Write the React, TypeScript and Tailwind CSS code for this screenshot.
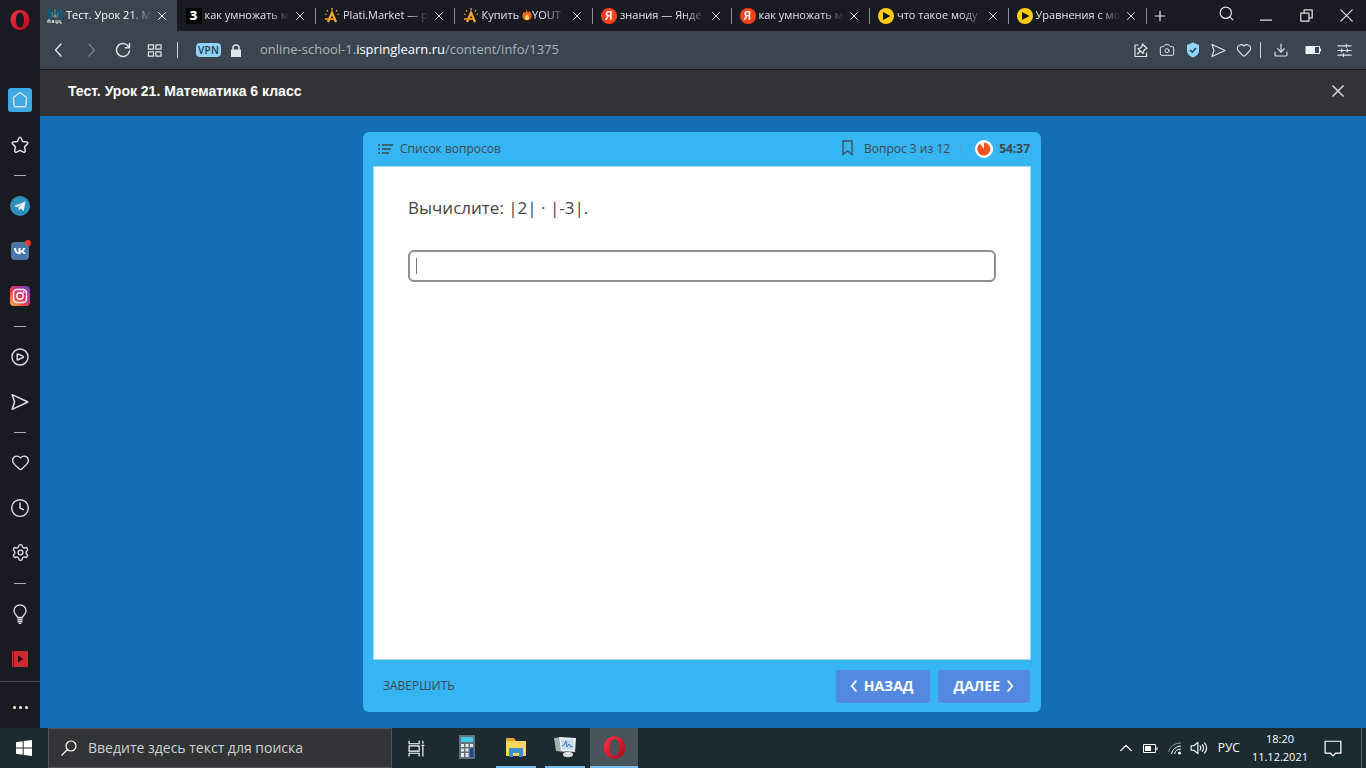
import type { ReactNode } from 'react'
import { Camera, Clock, Download, Heart, Plus, Search, Settings, X } from 'lucide-react'

interface Tab { title: string; icon: ReactNode; active?: boolean }

function Line({ d, size = 16, width = 1.2, box = 16, className = '' }: { d: string; size?: number; width?: number; box?: number; className?: string }) {
  return (
    <svg width={size} height={size} viewBox={`0 0 ${box} ${box}`} fill="none" stroke="currentColor" strokeWidth={width} strokeLinecap="round" strokeLinejoin="round" className={`shrink-0 ${className}`}>
      <path d={d} />
    </svg>
  )
}

function OperaLogo({ size, id }: { size: number; id: string }) {
  return (
    <svg width={size} height={size} viewBox="0 0 24 24" className="shrink-0">
      <defs>
        <linearGradient id={id} x1="0" y1="0" x2="1" y2="1">
          <stop offset="0" stopColor="#ff3346" />
          <stop offset="1" stopColor="#b0061c" />
        </linearGradient>
      </defs>
      <path fillRule="evenodd" fill={`url(#${id})`} d="M12 2C6.400 2 2.500 6.500 2.500 12s3.900 10 9.500 10 9.500-4.500 9.500-10S17.600 2 12 2Zm0 2.500c2.800 0 4 3.500 4 7.500s-1.200 7.500-4 7.500-4-3.500-4-7.500 1.200-7.500 4-7.500Z" />
    </svg>
  )
}

const SEND = 'M1 1.500L15 8L1 14.500L3.200 8Z'

const schoolIcon = (
  <svg width="16" height="16" viewBox="0 0 16 16" className="shrink-0">
    <path d="M1 1h3v10H1zM12 1h3v10h-3z" fill="#145a7c" />
    <path d="M8 1v6M5 4l1 6M11 4l-1 6" stroke="#2388a5" strokeWidth="1.500" />
    <circle cx="8" cy="8" r="1.500" fill="#e0714b" />
    <path d="M1 15v-3h2v3M5 15l1-3 1 3M9 12v3h2v-3M13 12v3h2" stroke="#e8eef0" fill="none" />
  </svg>
)
const znanijaIcon = (
  <span className="flex size-4 shrink-0 items-center justify-center bg-black text-xs leading-none font-extrabold text-white">З</span>
)
const platiIcon = (
  <svg width="16" height="16" viewBox="0 0 16 16" className="shrink-0" fill="none" stroke="#f5a82c">
    <path d="M4 14L8 4.500L12 14" strokeWidth="2.200" />
    <path d="M1 11h9" strokeWidth="1.800" stroke="#e88f22" />
    <path d="M8 0v2M3 2l1 1.500M13 2l-1 1.500M1 6l1.500.500M15 6l-1.500.500" strokeWidth="1.300" />
  </svg>
)
const yandexIcon = (
  <span className="flex size-4 shrink-0 items-center justify-center rounded-full bg-[#fc3f1d] text-xs leading-none font-semibold text-white">Я</span>
)
const playIcon = (
  <svg width="16" height="16" viewBox="0 0 16 16" className="shrink-0">
    <circle cx="8" cy="8" r="8" fill="#ffcc14" />
    <path d="M5 4L12.500 8L5 12Z" fill="#141414" />
  </svg>
)
const flame = (
  <svg width="10" height="13" viewBox="0 0 12 14" className="inline-block align-[-2px]">
    <path d="M5 0c1 2 .600 3 2.500 5C8.500 4 8 3 8.300 2.500 10 4 12 6 11.500 9.500 11 12.500 9 14 6 14S.500 12 .500 9C.500 6 2 5 2.500 3.500c.800.800.800 1.500 1 2C5 4 5.200 2 5 0Z" fill="#f4661b" />
    <path d="M6 6.500c.300 1.500 2.800 2.500 2.500 5C8.300 13 7.300 13.800 6 13.800S3.300 12.500 3.500 11C3.700 9 5.800 8.500 6 6.500Z" fill="#ffd85c" />
  </svg>
)

const tabs: Tab[] = [
  { title: 'Тест. Урок 21. М', icon: schoolIcon, active: true },
  { title: 'как умножать м', icon: znanijaIcon },
  { title: 'Plati.Market — р', icon: platiIcon },
  { title: 'Купить 🔥YOUT', icon: platiIcon },
  { title: 'знания — Янде', icon: yandexIcon },
  { title: 'как умножать м', icon: yandexIcon },
  { title: 'что такое моду', icon: playIcon },
  { title: 'Уравнения с мо', icon: playIcon },
]

const telegram = (
  <svg width="20" height="20" viewBox="0 0 20 20">
    <circle cx="10" cy="10" r="10" fill="#2f8fbd" />
    <path d="M4 10L15.500 5.500L13.800 15L10.500 12.600L8.800 14.300L8.400 11.500L13 7.500L7 11.200Z" fill="#eef2fb" />
  </svg>
)
const vk = (
  <span className="relative block">
    <svg width="18" height="18" viewBox="0 0 18 18">
      <rect width="18" height="18" rx="4" fill="#4a76a8" />
      <path d="M3 6h2c.200 2.500 1.200 4 2.500 4.500V6h2v2.700C10.800 8.500 11.800 7.300 12.300 6h2c-.300 1.400-1.200 2.500-2.100 3.100 1 .500 2 1.500 2.600 3h-2.200c-.500-1.100-1.500-1.900-3.100-2.100v2.100C5.500 12.400 3.100 10 3 6Z" fill="#fff" />
    </svg>
    <span className="absolute -top-0.5 -right-0.5 size-1.5 rounded-full bg-[#f23c34]" />
  </span>
)
const instagram = (
  <svg width="20" height="20" viewBox="0 0 20 20" fill="none">
    <defs>
      <linearGradient id="insta" x1="0" y1="1" x2="1" y2="0">
        <stop offset="0" stopColor="#fdc14b" />
        <stop offset=".35" stopColor="#ef4a3f" />
        <stop offset=".65" stopColor="#cc2d92" />
        <stop offset="1" stopColor="#5b45c9" />
      </linearGradient>
    </defs>
    <rect width="20" height="20" rx="4" fill="url(#insta)" />
    <rect x="3.500" y="3.500" width="13" height="13" rx="3.500" stroke="#fff" strokeWidth="1.400" />
    <circle cx="10" cy="10" r="3.200" stroke="#fff" strokeWidth="1.400" />
    <circle cx="13.800" cy="6.200" r=".900" fill="#fff" />
  </svg>
)
const player = (
  <svg width="18" height="18" viewBox="0 0 18 18" fill="none" stroke="currentColor" strokeWidth="1.400" strokeLinejoin="round">
    <circle cx="9" cy="9" r="8" />
    <path d="M6.200 6v6L12.500 9.300C12.500 8.500 9 6.800 6.200 6Z" />
  </svg>
)
const bulb = (
  <svg width="16" height="20" viewBox="0 0 16 20" fill="none" stroke="currentColor" strokeWidth="1.300">
    <path d="M5.500 13.500C5.500 11.500 2 10.500 2 6.800A6 6 0 0 1 14 6.800C14 10.500 10.500 11.500 10.500 13.500ZM5.500 15.500h5M5.500 17.500h5M6.500 19.300h3" />
  </svg>
)
const videoPanel = (
  <svg width="16" height="16" viewBox="0 0 16 16">
    <path d="M0 0h16v16H0z" fill="#cc2b32" />
    <path d="M1.500 0v16" stroke="#85151b" />
    <path d="M6 4.500L11.500 8L6 11.500Z" fill="#1c1014" />
  </svg>
)

const sidebar: { label: string; icon: ReactNode; divided?: boolean }[] = [
  {
    label: 'Экспресс-панель',
    icon: (
      <span className="flex size-6 items-center justify-center rounded-[3px] bg-[#3ca9e2]">
        <Line d="M1.500 6Q1.500 5.400 2 5L7 1.200Q8 .600 9 1.200L14 5Q14.500 5.400 14.500 6L14 13.500Q14 14.800 12.700 14.800H3.300Q2 14.800 2 13.500Z" width={1.4} />
      </span>
    ),
  },
  { label: 'Закладки', icon: <Line size={18} width={1.3} d="M8 1Q8.800 1 9.300 2.500L10.300 4.900L14 5.300Q15.700 5.800 14.500 7.200L12 9.500L12.700 13Q12.600 15 11 14.300L8 12.800L5 14.300Q3.400 15 3.300 13L4 9.500L1.500 7.200Q.300 5.800 2 5.300L5.700 4.900L6.700 2.500Q7.200 1 8 1Z" />, divided: true },
  { label: 'Telegram', icon: telegram },
  { label: 'ВКонтакте', icon: vk },
  { label: 'Instagram', icon: instagram, divided: true },
  { label: 'Плеер', icon: player },
  { label: 'Мой поток', icon: <Line size={18} width={1.3} d={SEND} />, divided: true },
  { label: 'Избранное', icon: <Heart size={19} strokeWidth={1.7} /> },
  { label: 'История', icon: <Clock size={20} strokeWidth={1.7} /> },
  { label: 'Настройки', icon: <Settings size={19} strokeWidth={1.7} />, divided: true },
  { label: 'Советы', icon: bulb },
  { label: 'Видео', icon: videoPanel },
]

function Sidebar() {
  return (
    <aside className="flex w-10 shrink-0 flex-col bg-[#181b20] text-[#dde1e5]">
      <div className="flex h-[77px] justify-center pt-2">
        <button aria-label="Opera" className="size-6"><OperaLogo size={24} id="opera-menu" /></button>
      </div>
      {sidebar.map(s => (
        <div key={s.label}>
          <button aria-label={s.label} className="flex h-[45px] w-full items-center justify-center">{s.icon}</button>
          {s.divided && <div className="flex h-4 items-center justify-center"><span className="h-px w-3 bg-[#a9adb2]" /></div>}
        </div>
      ))}
      <button aria-label="Ещё" className="mt-auto flex h-[47px] items-center justify-center gap-[3px] border-t border-[#4a4d52] pt-1">
        <span className="size-[3px] rounded-full bg-white" />
        <span className="size-[3px] rounded-full bg-white" />
        <span className="size-[3px] rounded-full bg-white" />
      </button>
    </aside>
  )
}

function TabStrip() {
  return (
    <div className="flex h-[31px] bg-[#181b20] text-[11px] text-[#dfe2e5]">
      <div className="flex min-w-0 max-w-[1108px] flex-1">
        {tabs.map((t, i) => (
          <div key={i} className="flex min-w-0 flex-1 items-center pr-px">
            <div className={`flex h-full min-w-0 flex-1 items-center gap-[3px] pr-2 pl-[7px] ${t.active ? 'bg-[#3b454f] text-white' : ''}`}>
              {t.icon}
              <span className="min-w-0 flex-1 overflow-hidden whitespace-nowrap [mask-image:linear-gradient(to_right,black_75%,transparent)]">
                {t.title.includes('🔥') ? <>Купить {flame}YOUT</> : t.title}
              </span>
              <button aria-label="Закрыть вкладку"><X size={14} strokeWidth={1.7} /></button>
            </div>
            <span className={`h-4 w-px ${t.active ? '' : 'bg-[#8b8f94]'}`} />
          </div>
        ))}
      </div>
      <button aria-label="Новая вкладка" className="ml-1"><Plus size={16} strokeWidth={1.8} /></button>
      <div className="ml-auto flex items-center">
        <button aria-label="Поиск по вкладкам" className="flex w-10 justify-center pb-1"><Search size={17} strokeWidth={1.7} /></button>
        <button aria-label="Свернуть" className="flex w-10 justify-center"><Line size={12} d="M0 13.500H16" width={1.5} /></button>
        <button aria-label="Свернуть в окно" className="flex w-10 justify-center"><Line size={13} d="M1 5H11V15H1ZM5 5V1H15V11H11" width={1.5} /></button>
        <button aria-label="Закрыть" className="flex w-10 justify-center"><Line size={13} d="M1 1L15 15M15 1L1 15" width={1.5} /></button>
      </div>
    </div>
  )
}

function AddressBar() {
  return (
    <div className="flex h-[39px] items-center border-b border-[#16191d] bg-[#3b454f] pr-3.5 pl-[11px] text-[#dfe4e9]">
      <button aria-label="Назад"><Line d="M10 2L4.500 8L10 14" width={1.4} /></button>
      <button aria-label="Вперёд" className="ml-4 text-[#77808a]"><Line d="M6 2L11.500 8L6 14" width={1.3} /></button>
      <button aria-label="Обновить" className="ml-4"><Line d="M14 5.500A6.500 6.500 0 1 0 14.400 9M14.500 1.500V5.700H10.300" width={1.4} /></button>
      <button aria-label="Экспресс-панель" className="ml-4"><Line size={15} d="M1.500 2H7V6.500H1.500ZM9.500 2H15V6.500H9.500ZM1.500 9.500H7V14H1.500ZM9.500 9.500H15V14H9.500Z" width={1.3} /></button>
      <span className="ml-[15px] h-4 w-px bg-[#ccd2d8]" />
      <span className="ml-[18px] rounded-sm bg-[#8fd2fa] px-0.5 text-[10px] leading-[14px] font-semibold tracking-wide text-[#243a4a]">VPN</span>
      <svg width="10" height="13" viewBox="0 0 10 13" className="ml-2.5" fill="#dfe4e9">
        <path d="M0 5.500h10V13H0z" />
        <path d="M2 6V4a3 3 0 0 1 6 0v2" fill="none" stroke="#dfe4e9" strokeWidth="1.500" />
      </svg>
      <p className="ml-[19px] text-[13px] text-[#a9b3bd]">
        online-school-1.<span className="text-white">ispringlearn.ru</span>/content/info/1375
      </p>
      <div className="ml-auto flex items-center gap-2.5">
        <button aria-label="Закрепить"><Line d="M5 3H2V14.500H13.500V11M9.500 2L14 6.500L12.500 7L10.500 9L10 11.500L5 6.700L7.500 6L9.200 4ZM7.300 9L4.500 12" width={1.2} /></button>
        <button aria-label="Снимок"><Camera size={16} strokeWidth={1.5} /></button>
        <button aria-label="Защита">
          <svg width="16" height="16" viewBox="0 0 16 16">
            <path d="M8 .500L14 3V9C14 12 11 14.200 8 15.500C5 14.200 2 12 2 9V3Z" fill="#90d5fb" />
            <path d="M5 8L7.300 10.200L11 6" fill="none" stroke="#2c4354" strokeWidth="1.600" />
          </svg>
        </button>
        <button aria-label="Мой поток"><Line size={15} d={SEND} /></button>
        <button aria-label="В избранное"><Heart size={16} strokeWidth={1.6} /></button>
      </div>
      <span className="ml-2 h-4 w-px bg-[#ccd2d8]" />
      <button aria-label="Загрузки" className="ml-3"><Download size={16} strokeWidth={1.7} /></button>
      <svg width="16" height="8" viewBox="0 0 16 8" className="ml-4">
        <path d="M.500 0h9.500v8H.500z" fill="#eef1f4" />
        <path d="M10 .500h4.500v7H10M15.500 2.500v3" fill="none" stroke="#eef1f4" />
      </svg>
      <button aria-label="Простая настройка" className="ml-4"><Line size={15} d="M1 3H15M1 8H15M1 13H15M10 1.500V4.500M5 6.500V9.500M11 6.500V9.500M7 11.500V14.500" width={1.3} /></button>
    </div>
  )
}

function Quiz() {
  return (
    <section className="mx-auto flex w-full max-w-[678px] flex-1 flex-col rounded-md bg-[#35b5f1] px-2.5 text-[#3f4a50]">
      <header className="flex h-[34px] items-center px-[5px] text-xs">
        <button className="flex items-center gap-[7px] font-medium">
          <svg width="15" height="10" viewBox="0 0 15 10" fill="none" stroke="currentColor">
            <path d="M4 1h11M4 5h9M4 9h7" strokeWidth="1.500" />
            <path d="M0 1h2M0 5h2M0 9h2" strokeWidth="1.500" />
          </svg>
          Список вопросов
        </button>
        <button aria-label="Отметить вопрос" className="ml-auto pb-0.5">
          <svg width="11" height="16" viewBox="0 0 11 16" fill="none" stroke="currentColor" strokeWidth="1.300">
            <path d="M1 1h9v13.500L5.500 11L1 14.500Z" />
          </svg>
        </button>
        <span className="ml-[11px]">Вопрос 3 из 12</span>
        <span className="ml-2.5 h-3 w-px bg-[#4aa9d8]" />
        <svg width="18" height="18" viewBox="0 0 18 18" className="ml-3.5">
          <circle cx="9" cy="9" r="9" fill="#fff" />
          <path d="M9 9V2.500A6.500 6.500 0 1 1 5 3.700Z" fill="#f4511e" />
        </svg>
        <span className="-mr-1 ml-1.5 font-bold">54:37</span>
      </header>
      <div className="flex-1 border border-[#a8d8f0] bg-white px-[34px] pt-[29px]">
        <label htmlFor="answer" className="block text-[17px] leading-6 font-medium text-[#444]">Вычислите: |2| · |-3|.</label>
        <div className="mt-[30px] flex h-8 items-center rounded-md border-2 border-[#8e8e8e] px-1.5">
          <span className="h-4 w-px bg-[#777]" />
          <input id="answer" type="text" className="min-w-0 flex-1 bg-transparent text-base outline-none" />
        </div>
      </div>
      <footer className="flex h-[52px] items-center pr-px pl-2.5 text-xs">
        <button>ЗАВЕРШИТЬ</button>
        <button className="ml-auto flex h-[33px] items-center gap-1 rounded-[3px] bg-[#538ae0] pr-4 pl-3 text-sm font-bold text-white">
          <Line size={12} d="M10.500 1.500L5 8L10.500 14.500" width={2.4} />НАЗАД
        </button>
        <button className="ml-2 flex h-[33px] items-center gap-1 rounded-[3px] bg-[#538ae0] pr-3.5 pl-4 text-sm font-bold text-white">
          ДАЛЕЕ<Line size={12} d="M5.500 1.500L11 8L5.500 14.500" width={2.4} />
        </button>
      </footer>
    </section>
  )
}

const calculator = (
  <svg width="18" height="24" viewBox="0 0 18 24">
    <path d="M1 0h16v24H1z" fill="#66727b" />
    <path d="M3 2h12v5H3z" fill="#45c6f3" />
    <path d="M3 9h3v3H3zM7.500 9h3v3h-3zM12 9h3v3h-3zM3 13.500h3v3H3zM7.500 13.500h3v3h-3zM3 18h3v4H3zM7.500 18h3v4h-3z" fill="#e5e9ec" />
    <path d="M12 13.500h3.500V22H12z" fill="#0b4ea2" />
  </svg>
)
const explorer = (
  <svg width="22" height="20" viewBox="0 0 22 20">
    <path d="M1 1h8l2 3h10v14H1z" fill="#e0a52e" />
    <path d="M1 4h20v15H1z" fill="#fbd35f" />
    <path d="M4 20v-8q0-1 1-1h12q1 0 1 1v8h-4v-4H8v4Z" fill="#3b91cf" />
  </svg>
)
const monitor = (
  <svg width="22" height="22" viewBox="0 0 22 22">
    <path d="M0 2l8-1 3 15-9-1z" fill="#a6aeb2" />
    <path d="M5 1l17 1-1 14-14-1z" fill="#e8edf0" />
    <path d="M7 3l13 1-1 10-11-1z" fill="#c4dcec" />
    <path d="M8 10l2-1 2-4 1 6 2-3 2 3 2-1" fill="none" stroke="#3676ad" />
    <ellipse cx="14" cy="18.500" rx="5" ry="2.800" fill="#d9dddf" />
  </svg>
)

const apps = [
  { label: 'Калькулятор', icon: calculator, style: 'border-transparent' },
  { label: 'Проводник', icon: explorer, style: 'border-[#76b9ed]' },
  { label: 'Монитор', icon: monitor, style: 'border-[#76b9ed]' },
]

function Taskbar() {
  return (
    <footer className="flex h-10 items-stretch bg-[#1b2b31] text-white">
      <button aria-label="Пуск" className="flex w-12 items-center justify-center">
        <svg width="16" height="16" viewBox="0 0 16 16" fill="#fff"><path d="M0 2.200L6.700 1.300V7.500H0zM7.700 1.100L16 0V7.500H7.700zM0 8.500H6.700V14.700L0 13.800zM7.700 8.500H16V16L7.700 14.900z" /></svg>
      </button>
      <label className="flex w-[344px] items-center gap-[11px] border border-[#515556] bg-[#323436] pl-3">
        <Line d="M6.500 9.500L1 15M15 6A5 5 0 1 1 5 6A5 5 0 1 1 15 6Z" width={1.2} />
        <input type="text" placeholder="Введите здесь текст для поиска" className="min-w-0 flex-1 bg-transparent text-sm outline-none placeholder:text-[#cfd1d2]" />
      </label>
      <button aria-label="Представление задач" className="flex w-12 items-center justify-center">
        <Line size={17} d="M1 1V3.500H10.500V1M1 15V12.500H10.500V15M1 5.500H10.500V10.500H1ZM14 1V3M14 6V15M13 5H15" width={1.1} />
      </button>
      <div className="ml-[3px] flex gap-px">
        {apps.map(a => (
          <button key={a.label} aria-label={a.label} className="flex w-12 justify-center px-1">
            <span className={`flex h-full w-full items-center justify-center border-b-2 ${a.style}`}>{a.icon}</span>
          </button>
        ))}
        <button aria-label="Opera" className="flex w-12 items-center justify-center border-b-2 border-[#76b9ed] bg-[#475459]"><OperaLogo size={27} id="opera-task" /></button>
      </div>
      <div className="ml-auto flex items-center">
        <button aria-label="Скрытые значки"><Line size={14} d="M2 11L8 5L14 11" width={1.5} /></button>
        <svg width="15" height="9" viewBox="0 0 15 9" className="ml-2.5" fill="none" stroke="#fff">
          <path d="M.500.500h12v8H.500zM14 3v3" />
          <path d="M2 2h6v5H2z" fill="#fff" stroke="none" />
        </svg>
        <svg width="14" height="14" viewBox="0 0 14 14" className="ml-2.5" fill="none" stroke="#fff">
          <path d="M.500 11A12 12 0 0 1 13 2" stroke="#8d979b" />
          <path d="M3.500 13A9.500 9.500 0 0 1 13 5M6.500 13A6.500 6.500 0 0 1 13 8" />
          <circle cx="11.500" cy="12" r="1.500" fill="#fff" stroke="none" />
        </svg>
        <Line size={18} className="ml-2" d="M1 6H3.500L7 3V13L3.500 10H1ZM9 6.300Q10 8 9 9.700M11 5Q13 8 11 11M13 3.500Q16.500 8 13 12.500" width={1} />
        <span className="ml-2.5 text-xs">РУС</span>
        <div className="ml-3 text-center text-[11px] leading-[18px]">
          <p>18:20</p>
          <p>11.12.2021</p>
        </div>
        <button aria-label="Центр уведомлений" className="ml-4"><Line size={18} d="M1 2H15V12.500H10.500L8 15L5.500 12.500H1Z" width={1.1} /></button>
        <span className="mr-1 ml-[19px] h-10 w-px bg-[#58656a]" />
      </div>
    </footer>
  )
}

export default function App() {
  return (
    <div className="flex min-h-screen flex-col font-['Open_Sans','Noto_Sans',sans-serif]">
      <div className="flex flex-1">
        <Sidebar />
        <div className="flex min-w-0 flex-1 flex-col">
          <TabStrip />
          <AddressBar />
          <header className="flex h-[46px] items-center justify-between bg-[#323435] pr-[18px] pb-1 pl-7 text-white">
            <h1 className="font-['Liberation_Sans',Arial,sans-serif] text-sm font-bold">Тест. Урок 21. Математика 6 класс</h1>
            <button aria-label="Закрыть тест" className="text-[#d3d5d6]"><X size={20} strokeWidth={2} /></button>
          </header>
          <main className="flex flex-1 flex-col bg-[#136eb6] py-4 pr-[18px] pl-4">
            <Quiz />
          </main>
        </div>
      </div>
      <Taskbar />
    </div>
  )
}
